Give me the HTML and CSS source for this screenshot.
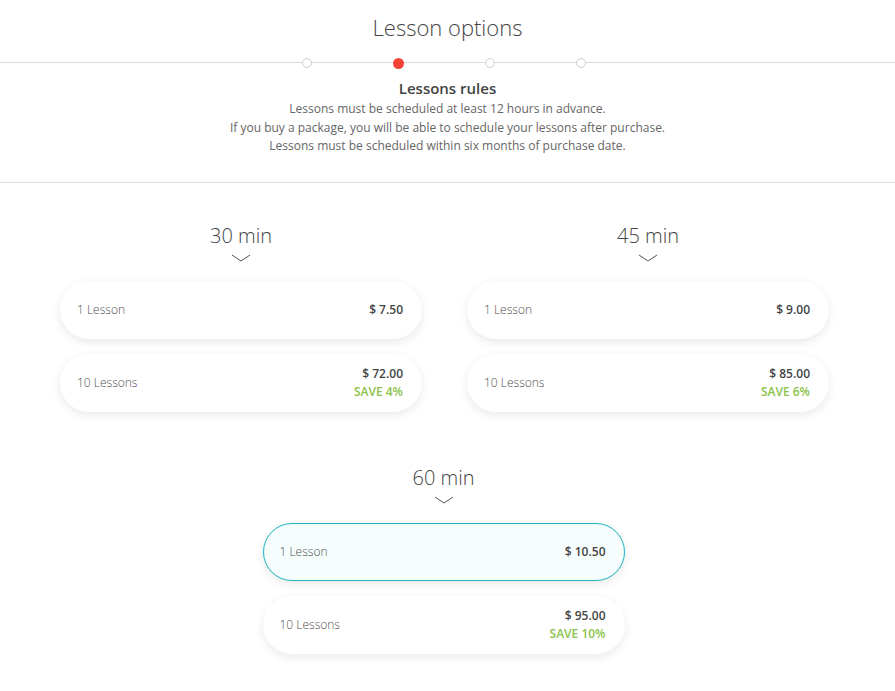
FILE: index.html
```html
<!DOCTYPE html>
<html>
<head>
<meta charset="utf-8">
<link rel="stylesheet" href="styles.css">
</head>
<body>
<div class="page">
  <header class="head">
    <h1 class="title">Lesson options</h1>
    <div class="stepper">
      <span class="dot"></span>
      <span class="dot active"></span>
      <span class="dot"></span>
      <span class="dot"></span>
    </div>
    <div class="rules">
      <h2 class="rules-title">Lessons rules</h2>
      <p class="rules-text">Lessons must be scheduled at least 12 hours in advance.<br>If you buy a package, you will be able to schedule your lessons after purchase.<br>Lessons must be scheduled within six months of purchase date.</p>
    </div>
  </header>

  <main class="options">
    <div class="row two">
      <section class="group">
        <div class="group-title">30 min</div>
        <svg class="chev" width="20" height="9" viewBox="0 0 20 9"><path d="M1 1 L10 7 L19 1" fill="none" stroke="#555" stroke-width="1"/></svg>
        <div class="card"><span class="label">1 Lesson</span><span class="price">$ 7.50</span></div>
        <div class="card"><span class="label">10 Lessons</span><span class="price-box"><span class="price">$ 72.00</span><span class="save">SAVE 4%</span></span></div>
      </section>
      <section class="group">
        <div class="group-title">45 min</div>
        <svg class="chev" width="20" height="9" viewBox="0 0 20 9"><path d="M1 1 L10 7 L19 1" fill="none" stroke="#555" stroke-width="1"/></svg>
        <div class="card"><span class="label">1 Lesson</span><span class="price">$ 9.00</span></div>
        <div class="card"><span class="label">10 Lessons</span><span class="price-box"><span class="price">$ 85.00</span><span class="save">SAVE 6%</span></span></div>
      </section>
    </div>
    <div class="row one">
      <section class="group">
        <div class="group-title">60 min</div>
        <svg class="chev" width="20" height="9" viewBox="0 0 20 9"><path d="M1 1 L10 7 L19 1" fill="none" stroke="#555" stroke-width="1"/></svg>
        <div class="card selected"><span class="label">1 Lesson</span><span class="price">$ 10.50</span></div>
        <div class="card"><span class="label">10 Lessons</span><span class="price-box"><span class="price">$ 95.00</span><span class="save">SAVE 10%</span></span></div>
      </section>
    </div>
  </main>
</div>
</body>
</html>
```
FILE: styles.css
```css
* { box-sizing: border-box; }
html, body { margin: 0; padding: 0; background: #fff; }
body {
  font-family: "Open Sans", "Noto Sans", sans-serif;
  color: #555;
}
.page { width: 895px; }
.head {
  border-bottom: 1px solid #dedede;
  padding-top: 12px;
  padding-bottom: 26px;
}
.title {
  margin: 0;
  text-align: center;
  font-weight: 300;
  font-size: 22px;
  line-height: 30px;
  color: #454545;
}
.stepper {
  position: relative;
  margin-top: 15px;
  height: 12px;
  display: flex;
  justify-content: center;
  align-items: center;
  gap: 81px;
  padding-right: 7px;
}
.stepper::before {
  content: "";
  position: absolute;
  left: 0; right: 0; top: 5px;
  height: 1px;
  background: #dcdcdc;
}
.dot {
  position: relative;
  width: 10px; height: 10px;
  border-radius: 50%;
  border: 1px solid #d0d0d0;
  background: #fff;
}
.dot.active {
  width: 11px; height: 11px;
  border: none;
  background: #f44336;
}
.rules { text-align: center; margin-top: 9px; }
.rules-title {
  margin: 0;
  font-size: 15px;
  line-height: 20px;
  font-weight: 600;
  color: #444;
}
.rules-text {
  margin: 2px 0 0;
  font-size: 12px;
  line-height: 18.5px;
  color: #666;
}
.options { padding-top: 40px; padding-bottom: 30px; }
.row { display: flex; }
.row.two { padding-left: 60px; gap: 45px; }
.row.one { justify-content: center; margin-top: 38px; padding-right: 8px; }
.group { width: 362px; display: flex; flex-direction: column; align-items: center; }
.group-title {
  font-size: 20px;
  font-weight: 300;
  line-height: 26px;
  color: #454545;
}
.chev { display: block; margin: 5px 0 18px; }
.card {
  width: 100%;
  height: 58px;
  border-radius: 29px;
  background: #fff;
  box-shadow: 0 3px 10px rgba(0,0,0,0.09);
  display: flex;
  align-items: center;
  justify-content: space-between;
  padding: 0 18px 0 16px;
  margin-bottom: 15px;
  border: 1px solid transparent;
}
.card.selected {
  border-color: #1eb3c2;
  background: #f6fdfd;
}
.label { font-size: 12px; font-weight: 300; color: #4f4f4f; }
.price-box { display: flex; flex-direction: column; align-items: flex-end; }
.price { font-size: 12px; font-weight: 600; color: #444; line-height: 18px; }
.save { font-size: 12px; font-weight: 600; color: #8bc34a; line-height: 18px; }
```
